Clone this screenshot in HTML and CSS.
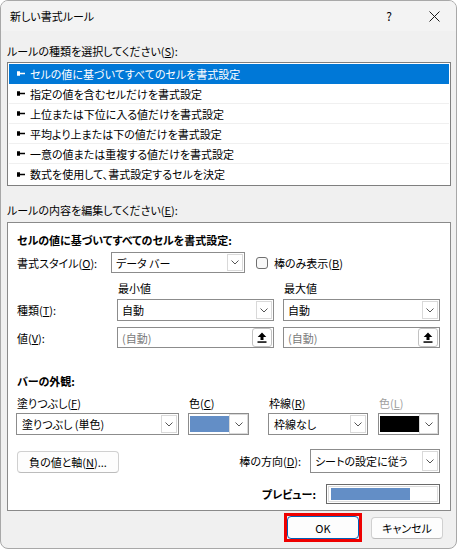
FILE: index.html
```html
<!DOCTYPE html>
<html lang="ja">
<head>
<meta charset="utf-8">
<title>新しい書式ルール</title>
<link rel="stylesheet" href="styles.css">
</head>
<body>
<div class="dialog">
  <div class="titlebar">
    <span class="title">新しい書式ルール</span>
    <span class="help">?</span>
    <svg class="close" width="11" height="11" viewBox="0 0 11 11"><path d="M0.5 0.5 L10.5 10.5 M10.5 0.5 L0.5 10.5" stroke="#1a1a1a" stroke-width="1" fill="none"/></svg>
  </div>
  <div class="content">
    <div class="label first">ルールの種類を選択してください(<u>S</u>):</div>
    <ul class="rules">
      <li class="rule selected"><svg class="pin" width="8" height="5" viewBox="0 0 8 5"><path d="M0 0.3 H3 V4.7 H0 Z M3 1.8 H8 V3.2 H3 Z"/></svg>セルの値に基づいてすべてのセルを書式設定</li>
      <li class="rule"><svg class="pin" width="8" height="5" viewBox="0 0 8 5"><path d="M0 0.3 H3 V4.7 H0 Z M3 1.8 H8 V3.2 H3 Z"/></svg>指定の値を含むセルだけを書式設定</li>
      <li class="rule"><svg class="pin" width="8" height="5" viewBox="0 0 8 5"><path d="M0 0.3 H3 V4.7 H0 Z M3 1.8 H8 V3.2 H3 Z"/></svg>上位または下位に入る値だけを書式設定</li>
      <li class="rule"><svg class="pin" width="8" height="5" viewBox="0 0 8 5"><path d="M0 0.3 H3 V4.7 H0 Z M3 1.8 H8 V3.2 H3 Z"/></svg>平均より上または下の値だけを書式設定</li>
      <li class="rule"><svg class="pin" width="8" height="5" viewBox="0 0 8 5"><path d="M0 0.3 H3 V4.7 H0 Z M3 1.8 H8 V3.2 H3 Z"/></svg>一意の値または重複する値だけを書式設定</li>
      <li class="rule last"><svg class="pin" width="8" height="5" viewBox="0 0 8 5"><path d="M0 0.3 H3 V4.7 H0 Z M3 1.8 H8 V3.2 H3 Z"/></svg>数式を使用して、書式設定するセルを決定</li>
    </ul>
    <div class="label second">ルールの内容を編集してください(<u>E</u>):</div>
    <div class="group">
      <div class="heading">セルの値に基づいてすべてのセルを書式設定:</div>
      <div class="style-row">
        <span class="style-label">書式スタイル(<u>O</u>):</span>
        <div class="combo style-combo">
          <span class="val">データ&nbsp;バー</span>
          <span class="drop"><svg width="8" height="5" viewBox="0 0 8 5"><path d="M0.5 0.5 L4 4 L7.5 0.5" stroke="#555" fill="none"/></svg></span>
        </div>
        <span class="checkbox"></span>
        <span class="check-label">棒のみ表示(<u>B</u>)</span>
      </div>
      <div class="mm-row heads">
        <span class="mm-label"></span>
        <span class="mm-cell">最小値</span>
        <span class="mm-cell right">最大値</span>
      </div>
      <div class="mm-row type-row">
        <span class="mm-label">種類(<u>T</u>):</span>
        <div class="combo mm-cell">
          <span class="val">自動</span>
          <span class="drop"><svg width="8" height="5" viewBox="0 0 8 5"><path d="M0.5 0.5 L4 4 L7.5 0.5" stroke="#555" fill="none"/></svg></span>
        </div>
        <div class="combo mm-cell right">
          <span class="val">自動</span>
          <span class="drop"><svg width="8" height="5" viewBox="0 0 8 5"><path d="M0.5 0.5 L4 4 L7.5 0.5" stroke="#555" fill="none"/></svg></span>
        </div>
      </div>
      <div class="mm-row value-row">
        <span class="mm-label">値(<u>V</u>):</span>
        <div class="field mm-cell">
          <span class="val placeholder">(自動)</span>
          <span class="pick"><svg width="10" height="11" viewBox="0 0 10 11"><path d="M5 0.5 L9.3 5 H6.5 V8 H3.5 V5 H0.7 Z"/><rect x="0.5" y="9.3" width="9" height="1.5"/></svg></span>
        </div>
        <div class="field mm-cell right">
          <span class="val placeholder">(自動)</span>
          <span class="pick"><svg width="10" height="11" viewBox="0 0 10 11"><path d="M5 0.5 L9.3 5 H6.5 V8 H3.5 V5 H0.7 Z"/><rect x="0.5" y="9.3" width="9" height="1.5"/></svg></span>
        </div>
      </div>
      <div class="heading bar-heading">バーの外観:</div>
      <div class="appearance">
        <div class="ap-col fill-col">
          <span class="ap-label">塗りつぶし(<u>F</u>)</span>
          <div class="combo ap-combo">
            <span class="val">塗りつぶし&nbsp;(単色)</span>
            <span class="drop"><svg width="8" height="5" viewBox="0 0 8 5"><path d="M0.5 0.5 L4 4 L7.5 0.5" stroke="#555" fill="none"/></svg></span>
          </div>
        </div>
        <div class="ap-col color-col">
          <span class="ap-label">色(<u>C</u>)</span>
          <div class="combo ap-combo color-combo">
            <span class="swatch blue"></span>
            <span class="drop"><svg width="8" height="5" viewBox="0 0 8 5"><path d="M0.5 0.5 L4 4 L7.5 0.5" stroke="#555" fill="none"/></svg></span>
          </div>
        </div>
        <div class="ap-col border-col">
          <span class="ap-label">枠線(<u>R</u>)</span>
          <div class="combo ap-combo">
            <span class="val">枠線なし</span>
            <span class="drop"><svg width="8" height="5" viewBox="0 0 8 5"><path d="M0.5 0.5 L4 4 L7.5 0.5" stroke="#555" fill="none"/></svg></span>
          </div>
        </div>
        <div class="ap-col colorl-col">
          <span class="ap-label disabled">色(<u>L</u>)</span>
          <div class="combo ap-combo color-combo">
            <span class="swatch black"></span>
            <span class="drop"><svg width="8" height="5" viewBox="0 0 8 5"><path d="M0.5 0.5 L4 4 L7.5 0.5" stroke="#555" fill="none"/></svg></span>
          </div>
        </div>
      </div>
      <div class="action-row">
        <button class="btn neg">負の値と軸(<u>N</u>)...</button>
        <span class="dir-label">棒の方向(<u>D</u>):</span>
        <div class="combo dir-combo">
          <span class="val">シートの設定に従う</span>
          <span class="drop"><svg width="8" height="5" viewBox="0 0 8 5"><path d="M0.5 0.5 L4 4 L7.5 0.5" stroke="#555" fill="none"/></svg></span>
        </div>
      </div>
      <div class="preview-row">
        <span class="preview-label">プレビュー:</span>
        <div class="preview"><div class="preview-inner"><div class="preview-bar"></div></div></div>
      </div>
    </div>
    <div class="footer">
      <div class="ok-frame"><button class="btn ok">OK</button></div>
      <button class="btn cancel">キャンセル</button>
    </div>
  </div>
</div>
</body>
</html>
```
FILE: styles.css
```css
* { box-sizing: border-box; }
html, body { margin: 0; padding: 0; background: #ffffff; }
body {
  font-family: "Noto Sans CJK JP", "Noto Sans", sans-serif;
  font-size: 11px;
  font-feature-settings: "palt";
  color: #000;
  line-height: 14px;
}
u { text-decoration: underline; text-underline-offset: 1px; }

.dialog {
  width: 457px;
  height: 549px;
  border: 1px solid #a8a8a8;
  border-radius: 8px;
  background: #f0f0f0;
  overflow: hidden;
  display: flex;
  flex-direction: column;
}

.titlebar {
  height: 30px;
  flex: none;
  background: #f3f3f3;
  display: flex;
  align-items: center;
  padding: 0 16px 0 9px;
}
.title { flex: 1; }
.help { margin-right: 37px; font-size: 12px; }
.close { display: block; }

.content { padding: 0 5px 0 6px; display: flex; flex-direction: column; }

.label { height: 14px; }
.label.first { margin-top: 13px; }
.label.second { margin-top: 17px; }

.rules {
  list-style: none;
  margin: 4px 0 0;
  padding: 1px;
  height: 124px;
  border: 1px solid #7f7f7f;
  background: #fff;
}
.rule {
  height: 20px;
  display: flex;
  align-items: center;
  padding-left: 8px;
  border-bottom: 1px solid #f0f0f0;
}
.rule.last { border-bottom: none; }
.rule.selected { background: #0078d7; color: #fff; border-bottom-color: #0078d7; }
.pin { fill: #000; margin-right: 5px; flex: none; }
.rule.selected .pin { fill: #fff; }

.group {
  margin-top: 5px;
  height: 289px;
  border: 1px solid #8a8a8a;
  background: #fff;
  padding: 10px 10px 0 8px;
  display: flex;
  flex-direction: column;
}
.heading { height: 14px; font-weight: bold; padding-left: 1px; }
.bar-heading { margin-top: 26px; }

.combo, .field {
  display: flex;
  align-items: stretch;
  border: 1px solid #8c8c8c;
  background: #fff;
  padding: 1px;
}
.val {
  flex: 1;
  display: flex;
  align-items: center;
  padding-left: 3px;
  white-space: nowrap;
  overflow: hidden;
}
.placeholder { color: #7a7a7a; }
.drop {
  width: 16px;
  flex: none;
  border: 1px solid #d9d9d9;
  background: #fff;
  display: flex;
  align-items: center;
  justify-content: center;
}
.drop svg { display: block; }

.style-row { margin-top: 5px; height: 21px; display: flex; align-items: center; }
.style-label { width: 95px; padding-left: 1px; }
.style-combo { width: 134px; height: 21px; }
.checkbox {
  width: 12px;
  height: 12px;
  margin-left: 11px;
  border: 1px solid #6f6f6f;
  border-radius: 3px;
  background: #f8f8f8;
}
.check-label { margin-left: 6px; }

.mm-row { display: flex; align-items: center; }
.mm-label { width: 101px; padding-left: 1px; }
.mm-cell { width: 157px; }
.mm-cell.right { margin-left: 9px; }
.heads { margin-top: 8px; height: 14px; }
.heads .mm-cell { padding-left: 1px; }
.type-row { margin-top: 4px; height: 22px; }
.type-row .combo { height: 22px; }
.value-row { margin-top: 6px; height: 21px; }
.value-row .field { height: 21px; padding: 0 1px 0 1px; }
.pick {
  width: 20px;
  height: 19px;
  flex: none;
  border: 1px solid #c2c2c2;
  border-radius: 3px;
  background: #fff;
  display: flex;
  align-items: center;
  justify-content: center;
}
.pick svg { display: block; fill: #000; }

.appearance { margin-top: 8px; display: flex; }
.ap-col { display: flex; flex-direction: column; gap: 3px; }
.ap-label { height: 14px; padding-left: 1px; }
.ap-label.disabled { color: #a0a0a0; }
.ap-combo { height: 22px; }
.ap-combo .val { padding-left: 4px; }
.fill-col { width: 163px; }
.color-col { width: 61px; margin-left: 9px; }
.border-col { width: 100px; margin-left: 19px; }
.colorl-col { width: 61px; margin-left: 10px; }
.color-combo { padding: 0; }
.swatch { flex: 1; margin: 2px 0 2px 1px; }
.swatch.blue { background: #638ec6; }
.swatch.black { background: #000; }
.color-combo .drop { width: 19px; }

.btn {
  font-family: inherit;
  font-size: 11px;
  font-feature-settings: "palt";
  line-height: 14px;
  color: #000;
  background: #fdfdfd;
  border: 1px solid #d0d0d0;
  border-bottom-color: #bcbcbc;
  border-radius: 4px;
  padding: 0;
  margin: 0;
}

.action-row { margin-top: 14px; height: 24px; display: flex; align-items: flex-end; }
.neg { width: 102px; height: 22px; margin-left: 1px; margin-right: auto; }
.dir-label { align-self: center; margin-right: 9px; }
.dir-combo { width: 130px; height: 24px; }
.dir-combo .val { padding-left: 3px; }

.preview-row { margin-top: 11px; height: 20px; display: flex; align-items: center; justify-content: flex-end; }
.preview-label { font-weight: bold; margin-right: 10px; }
.preview { width: 114px; height: 20px; border: 1px solid #6a6a6a; padding: 1px; background: #fff; }
.preview-inner { height: 100%; border: 1px solid #dcdcdc; padding: 1px 2px; }
.preview-bar { width: 79px; height: 12px; background: #638ec6; }

.footer {
  margin-top: 2px;
  padding-right: 8px;
  display: flex;
  justify-content: flex-end;
  align-items: center;
}
.ok-frame { width: 78px; height: 29px; border: 3px solid #ee0000; }
.ok { width: 72px; height: 23px; display: block; border-color: #005fb8; }
.cancel { width: 72px; height: 22px; margin-left: 9px; }
```
